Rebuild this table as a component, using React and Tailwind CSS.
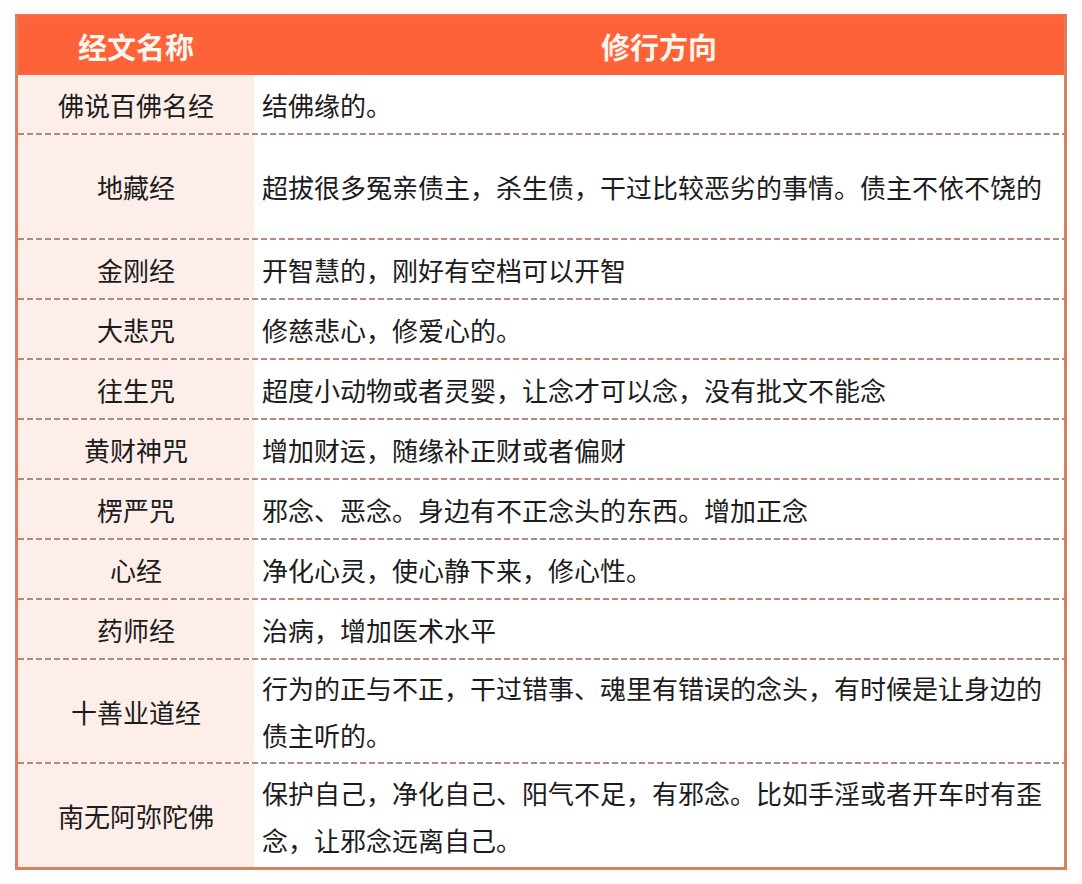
import React from "react";

const rows = [
  { name: "佛说百佛名经", text: ["结佛缘的。"], h: "h-[58px]" },
  { name: "地藏经", text: ["超拔很多冤亲债主，杀生债，干过比较恶劣的事情。债主不依不饶的"], h: "h-[103px]" },
  { name: "金刚经", text: ["开智慧的，刚好有空档可以开智"], h: "h-[58px]" },
  { name: "大悲咒", text: ["修慈悲心，修爱心的。"], h: "h-[58px]" },
  { name: "往生咒", text: ["超度小动物或者灵婴，让念才可以念，没有批文不能念"], h: "h-[58px]" },
  { name: "黄财神咒", text: ["增加财运，随缘补正财或者偏财"], h: "h-[58px]" },
  { name: "楞严咒", text: ["邪念、恶念。身边有不正念头的东西。增加正念"], h: "h-[58px]" },
  { name: "心经", text: ["净化心灵，使心静下来，修心性。"], h: "h-[58px]" },
  { name: "药师经", text: ["治病，增加医术水平"], h: "h-[58px]" },
  { name: "十善业道经", text: ["行为的正与不正，干过错事、魂里有错误的念头，有时候是让身边的", "债主听的。"], h: "h-[102px]" },
  { name: "南无阿弥陀佛", text: ["保护自己，净化自己、阳气不足，有邪念。比如手淫或者开车时有歪", "念，让邪念远离自己。"], h: "h-[103px]" },
];

export default function App() {
  return (
    <div
      className="w-[1082px] h-[884px] bg-white pt-[14px] pl-[15px]"
      style={{ fontFamily: '"Noto Sans CJK SC", "Noto Sans", sans-serif' }}
    >
      <div className="w-[1052px] border-[3px] border-[#d9805f] border-t-[#f76a45] bg-white">
        <div className="flex h-[58px] bg-[#fe6239] text-[#fff6ee] font-bold text-[29px] leading-none">
          <div className="w-[236px] flex items-center justify-center">经文名称</div>
          <div className="flex-1 flex items-center justify-center">修行方向</div>
        </div>
        {rows.map((r, i) => (
          <React.Fragment key={i}>
            <div className={`flex ${r.h} text-[#1c1c1c] text-[26px]`}>
              <div className="w-[236px] bg-[#fdeee9] flex items-center justify-center">{r.name}</div>
              <div className="flex-1 flex flex-col justify-center pl-[8px] leading-[47px]">
                {r.text.map((t, j) => (
                  <div key={j} className="whitespace-nowrap">{t}</div>
                ))}
              </div>
            </div>
            {i < rows.length - 1 && (
              <div className="h-[2px] bg-[repeating-linear-gradient(90deg,#b8887a_0px,#b8887a_6px,transparent_6px,transparent_9px)]" />
            )}
          </React.Fragment>
        ))}
      </div>
    </div>
  );
}
